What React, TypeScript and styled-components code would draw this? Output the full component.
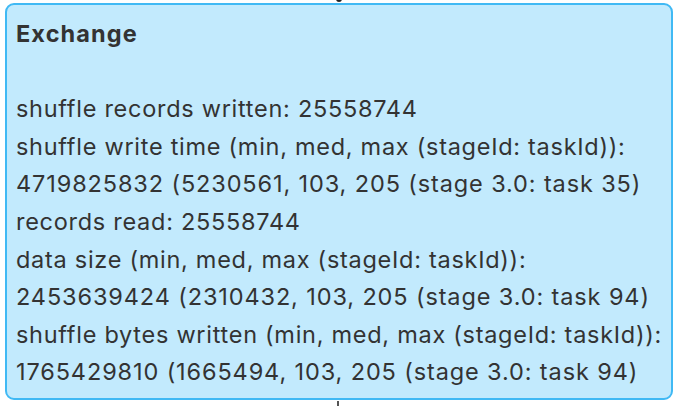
import styled, { createGlobalStyle } from "styled-components";

const GlobalStyle = createGlobalStyle`
  html, body {
    margin: 0;
    padding: 0;
    background: #ffffff;
  }
  body {
    width: 680px;
    height: 406px;
    overflow: hidden;
    font-family: Inter, "Noto Sans", sans-serif;
  }
`;

const metrics = [
  "shuffle records written: 25558744",
  "shuffle write time (min, med, max (stageId: taskId)):",
  "4719825832 (5230561, 103, 205 (stage 3.0: task 35)",
  "records read: 25558744",
  "data size (min, med, max (stageId: taskId)):",
  "2453639424 (2310432, 103, 205 (stage 3.0: task 94)",
  "shuffle bytes written (min, med, max (stageId: taskId)):",
  "1765429810 (1665494, 103, 205 (stage 3.0: task 94)",
];

function App() {
  return (
    <>
      <GlobalStyle />
      <Canvas>
        <EdgeIn />
        <Node>
          <Title>Exchange</Title>
          <Spacer />
          {metrics.map((line) => (
            <Line key={line} $numeric={/^\d/.test(line)}>
              {line}
            </Line>
          ))}
        </Node>
        <EdgeOut />
      </Canvas>
    </>
  );
}

const Canvas = styled.div`
  position: relative;
  width: 680px;
  height: 406px;
  padding: 3px 0 0 5px;
  box-sizing: border-box;
`;

const EdgeIn = styled.div`
  position: absolute;
  top: -3px;
  left: 336px;
  width: 6px;
  height: 5px;
  border-radius: 0 0 3px 3px;
  background: #222;
`;

const EdgeOut = styled.div`
  position: absolute;
  top: 401px;
  left: 337px;
  width: 2px;
  height: 5px;
  background: #555;
`;

const Node = styled.div`
  width: 668px;
  height: 397px;
  box-sizing: border-box;
  padding: 10px 0 0 9px;
  background: #c2eafd;
  border: 2px solid #40b9f4;
  border-radius: 9px;
  color: #333333;
  font-size: 23.5px;
  line-height: 37.6px;
`;

const Title = styled.div`
  font-weight: 700;
  letter-spacing: 1.1px;
`;

const Spacer = styled.div`
  height: 37.6px;
`;

const Line = styled.div<{ $numeric?: boolean }>`
  white-space: nowrap;
  letter-spacing: ${(p) => (p.$numeric ? "0.88px" : "0.72px")};
`;

export default App;
